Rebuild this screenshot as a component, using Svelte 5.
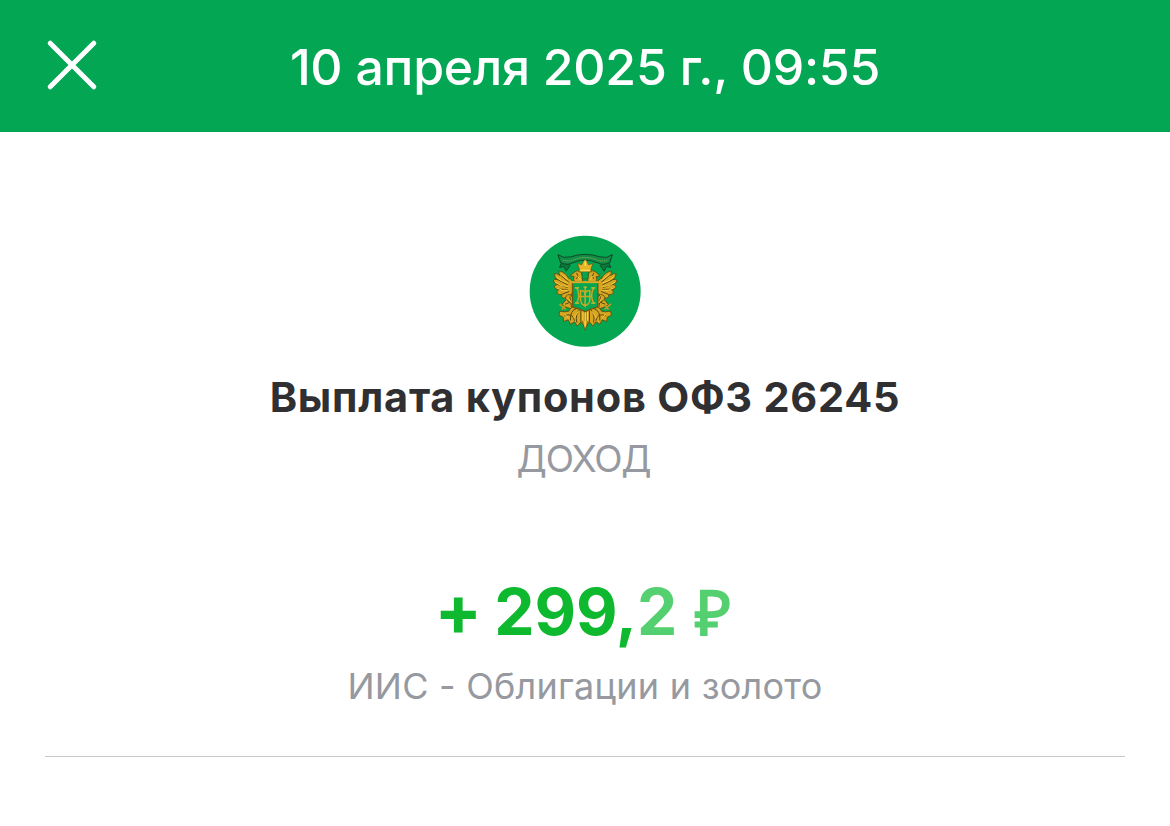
<script lang="ts">
  const operation = {
    date: '10 апреля 2025 г., 09:55',
    title: 'Выплата купонов ОФЗ 26245',
    type: 'ДОХОД',
    sign: '+',
    whole: '299,',
    fraction: '2',
    currency: '₽',
    account: 'ИИС - Облигации и золото',
  };
</script>

<div class="screen">
  <header class="topbar">
    <button class="close" aria-label="Закрыть">
      <svg viewBox="0 0 48 48" width="48" height="48">
        <path d="M2.2 2.2 45.8 45.8M45.8 2.2 2.2 45.8" />
      </svg>
    </button>
    <h1 class="date">{operation.date}</h1>
  </header>

  <main class="details">
    <svg class="emblem" viewBox="26.5 26.5 336 336" width="112" height="112" aria-hidden="true">
      <circle cx="195" cy="195" r="166.5" fill="#04a651" />

      <!-- ribbon -->
      <g stroke="#0b4a26" stroke-width="3" stroke-linejoin="round">
        <path d="M114 86 123 112 118 124 131 121 138 135 150 118 Z" fill="#087a3c" />
        <path d="M276 86 267 112 272 124 259 121 252 135 240 118 Z" fill="#087a3c" />
        <path d="M114 86Q130 98 151 92Q195 77 239 92Q260 98 276 86L269 109Q250 119 232 110Q195 94 158 110Q140 119 121 109Z" fill="#138c48" />
      </g>
      <path d="M128 102Q145 107 160 101Q195 87 230 101Q245 107 262 102" fill="none" stroke="#7fae4a" stroke-width="3" stroke-dasharray="4 2" />

      <!-- one half of the eagle, mirrored for the other -->
      {#each [1, -1] as side}
        <g transform="translate(195 0) scale({side} 1)">
          <g fill="#d7a621" stroke="#5b4a10" stroke-width="2.5" stroke-linejoin="round">
            <path d="M-34 180Q-38 158-50 156Q-57 140-78 134Q-80 141-76 148Q-85 140-93 143Q-92 154-84 160Q-93 158-96 164Q-92 171-84 175Q-92 175-93 183Q-87 190-79 191Q-87 194-84 202Q-77 207-70 205Q-73 211-66 216Q-56 217-46 208L-34 196Z" />
            <path d="M-8 155 -11 140Q-20 129-32 138L-45 149-33 151Q-38 160-31 167L-8 170Z" />
            <path d="M-46 205Q-62 206-58 221L-70 236-54 244-36 250-22 240-36 215Z" />
            <path d="M-26 240Q-44 242-49 255L-61 257-76 255-79 267-66 273-65 286-51 281-44 294-32 287-23 300-13 287-2 302V241L-15 247Z" />
          </g>
          <g fill="none" stroke="#5b4a10" stroke-width="3">
            <path d="M-74 147-49 168M-86 159-52 176M-86 174-53 184M-79 189-52 190M-69 204-48 196" />
            <path d="M-56 221-35 236M-46 211-41 244M-60 234-44 228" />
            <path d="M-62 269Q-38 258-32 284M-44 283Q-46 253-26 247M-25 289Q-31 264-14 247M-13 286V253" />
            <path d="M-26 140Q-17 151-26 158" />
          </g>
          <path d="M-52 160Q-63 153-72 144M-52 171Q-75 165-86 151M-52 181Q-74 182-90 168M-52 192Q-70 196-84 186M-23 150-14 162M-50 275-62 264M-34 276-20 255M-7 286V256M-49 218-40 232" fill="none" stroke="#f9cd3b" stroke-width="3" />
          <path d="M-77 233-58 250M-70 250-60 238" stroke="#c69b1e" stroke-width="5" />
        </g>
      {/each}

      <!-- crown -->
      <path d="M178 130 172 112 185 116 189 107 195 99 201 107 205 116 218 112 212 130 214 137H176Z" fill="#e5b62a" stroke="#665211" stroke-width="2" />
      <path d="M181 133H209M195 105V119" stroke="#ffdc55" stroke-width="4" />
      <path d="M186 139V158H204V139" fill="#04a651" stroke="#315d20" stroke-width="2" />

      <!-- shield and monogram -->
      <path d="M157 168H233V236Q233 246 218 247L195 256 172 247Q157 246 157 236Z" fill="#04a651" stroke="#725713" stroke-width="4" />
      <path d="M152 168H238" stroke="#d9ad26" stroke-width="6" />
      <g fill="none" stroke="#c8a925" stroke-width="4.5">
        <path d="M170 185Q181 208 170 231M220 185Q209 208 220 231M181 191V220Q182 235 195 239Q208 235 209 220V191M176 211H214M195 183V243" />
        <path d="M181 195Q195 190 195 208Q195 190 209 195" />
      </g>
      <path d="M164 185H177M213 185H226M164 231H177M213 231H226M190 183H200" stroke="#ddb92b" stroke-width="4" />
      <path d="M186 284 195 313 204 284" fill="#d6a31a" stroke="#5b4a10" stroke-width="2" />
      <path d="M195 258V301" stroke="#f9cd3b" stroke-width="5" />
    </svg>

    <h2 class="title">{operation.title}</h2>
    <div class="type">{operation.type}</div>

    <div class="amount">
      <span class="sign">{operation.sign}</span>
      <span>{operation.whole}<span class="minor">{operation.fraction}</span></span>
      <span class="minor currency">{operation.currency}</span>
    </div>
    <div class="account">{operation.account}</div>
    <hr />
  </main>
</div>

<style>
  :global(body) {
    background: #fff;
  }

  .screen {
    width: 1170px;
    height: 826px;
    overflow: hidden;
    background: #fff;
    font-family: Inter, 'Liberation Sans', sans-serif;
    text-align: center;
    white-space: nowrap;
  }

  .topbar {
    box-sizing: border-box;
    display: grid;
    grid-template-columns: 48px 1fr 48px;
    align-items: center;
    height: 132px;
    padding: 0 48px 2px;
    background: #02a653;
    color: #fff;
  }

  .close {
    width: 48px;
    height: 48px;
    padding: 0;
    border: 0;
    background: none;
  }

  .close svg {
    display: block;
    fill: none;
    stroke: #fff;
    stroke-width: 5;
    stroke-linecap: round;
    overflow: visible;
  }

  .date {
    margin: 0;
    padding-top: 3px;
    font-size: 50px;
    font-weight: 500;
    line-height: 60px;
    letter-spacing: -0.26px;
  }

  .details {
    display: flex;
    flex-direction: column;
    align-items: center;
    padding: 103px 45px 0;
  }

  .emblem {
    display: block;
  }

  .title {
    margin: 24px 0 0;
    color: #303032;
    font-size: 41.5px;
    font-weight: 700;
    line-height: 52px;
    letter-spacing: 0.75px;
  }

  .type {
    margin-top: 10px;
    padding-right: 3px;
    color: #9699a0;
    font-size: 37px;
    line-height: 52px;
    letter-spacing: -1.2px;
  }

  .amount {
    display: flex;
    align-items: baseline;
    gap: 12px;
    height: 80px;
    margin-top: 85px;
    padding-right: 4px;
    color: #0fb92f;
    font-size: 64px;
    font-weight: 700;
    line-height: 80px;
  }

  .sign {
    font-size: 70px;
    font-feature-settings: 'calt' 0;
  }

  .minor {
    color: #54d070;
  }

  .currency {
    padding-left: 6px;
    font-family: 'Liberation Sans', sans-serif;
    font-size: 62px;
  }

  .account {
    margin-top: 14px;
    color: #9699a0;
    font-size: 36px;
    line-height: 44px;
    letter-spacing: 0.25px;
    font-feature-settings: 'calt' 0;
  }

  hr {
    width: 100%;
    height: 1px;
    margin: 48px 0 0;
    border: 0;
    background: #c8c9cc;
  }
</style>
